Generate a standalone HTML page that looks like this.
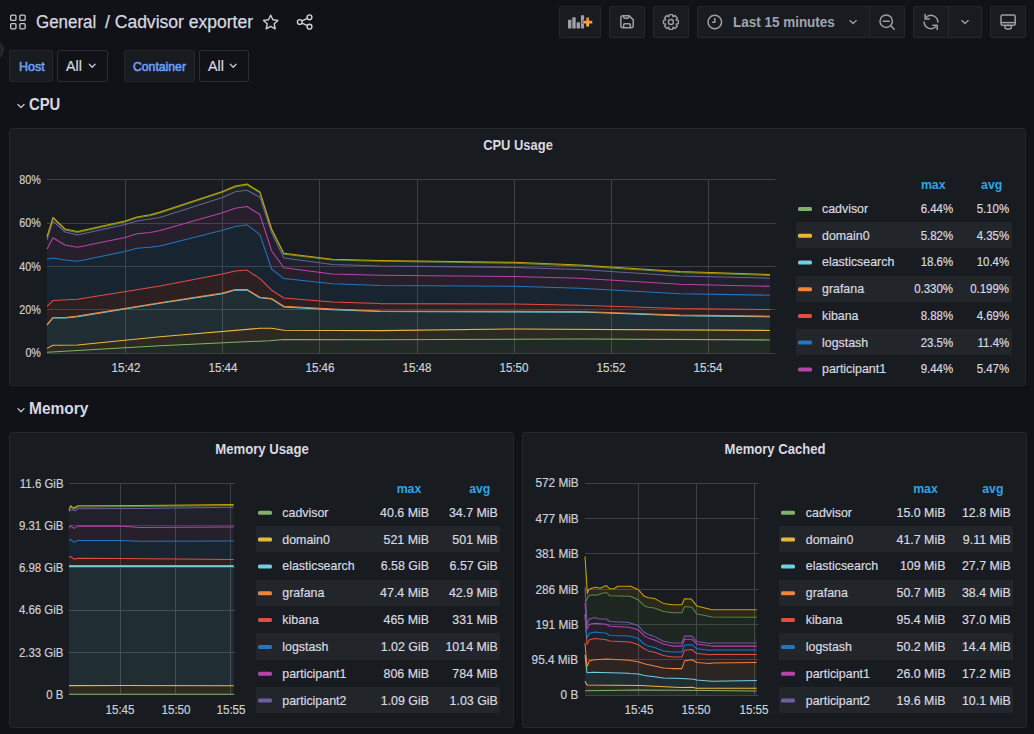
<!DOCTYPE html>
<html><head><meta charset="utf-8"><style>
html,body{margin:0;padding:0;}
body{width:1034px;height:734px;overflow:hidden;background:#111217;position:relative;font-family:"Liberation Sans", sans-serif;}
</style></head><body>

<div style='position:absolute;top:13.24px;font-size:18.5px;line-height:18.5px;color:#d8d9e0;font-weight:400;white-space:nowrap;transform:scaleX(0.9146);transform-origin:0 0;left:35.8px;-webkit-text-stroke:0.25px #d8d9e0;'>General</div>
<div style='position:absolute;top:13.24px;font-size:18.5px;line-height:18.5px;color:#d8d9e0;font-weight:400;white-space:nowrap;transform:scaleX(0.9470);transform-origin:0 0;left:105px;-webkit-text-stroke:0.25px #d8d9e0;'>/ Cadvisor exporter</div>
<div style="position:absolute;left:559px;top:6px;width:42px;height:32px;background:#181b1f;border:1px solid #25272d;box-sizing:border-box;border-radius:2px;"></div>
<div style="position:absolute;left:609px;top:6px;width:36px;height:32px;background:#181b1f;border:1px solid #25272d;box-sizing:border-box;border-radius:2px;"></div>
<div style="position:absolute;left:653px;top:6px;width:36px;height:32px;background:#181b1f;border:1px solid #25272d;box-sizing:border-box;border-radius:2px;"></div>
<div style="position:absolute;left:697px;top:6px;width:208px;height:32px;background:#181b1f;border:1px solid #25272d;box-sizing:border-box;border-radius:2px;"></div>
<div style="position:absolute;left:913px;top:6px;width:69px;height:32px;background:#181b1f;border:1px solid #25272d;box-sizing:border-box;border-radius:2px;"></div>
<div style="position:absolute;left:990px;top:6px;width:36px;height:32px;background:#181b1f;border:1px solid #25272d;box-sizing:border-box;border-radius:2px;"></div>
<div style='position:absolute;top:14.73px;font-size:14.5px;line-height:14.5px;color:#a3a4ab;font-weight:700;white-space:nowrap;transform:scaleX(0.9289);transform-origin:0 0;left:732.7px;'>Last 15 minutes</div>
<div style="position:absolute;left:-16px;top:39.5px;width:18px;height:18px;border-radius:50%;background:#212429;border:1px solid #2a2d33;"></div>
<div style="position:absolute;left:9px;top:50px;width:44px;height:32px;background:#181b1f;border:1px solid #24262c;box-sizing:border-box;border-radius:2px;"></div>
<div style='position:absolute;top:60.76px;font-size:12.8px;line-height:12.8px;color:#6e9fff;font-weight:400;white-space:nowrap;transform:scaleX(0.9727);transform-origin:0 0;left:18.6px;-webkit-text-stroke:0.55px #6e9fff;'>Host</div>
<div style="position:absolute;left:57px;top:50px;width:51px;height:32px;background:#111217;border:1px solid #2a2d34;box-sizing:border-box;border-radius:2px;"></div>
<div style='position:absolute;top:58.53px;font-size:14.5px;line-height:14.5px;color:#d8d9e0;font-weight:400;white-space:nowrap;transform:scaleX(0.9804);transform-origin:0 0;left:66.2px;-webkit-text-stroke:0.2px #d8d9e0;'>All</div>
<div style="position:absolute;left:124px;top:50px;width:71px;height:32px;background:#181b1f;border:1px solid #24262c;box-sizing:border-box;border-radius:2px;"></div>
<div style='position:absolute;top:60.76px;font-size:12.8px;line-height:12.8px;color:#6e9fff;font-weight:400;white-space:nowrap;transform:scaleX(0.9549);transform-origin:0 0;left:132.7px;-webkit-text-stroke:0.55px #6e9fff;'>Container</div>
<div style="position:absolute;left:199px;top:50px;width:50px;height:32px;background:#111217;border:1px solid #2a2d34;box-sizing:border-box;border-radius:2px;"></div>
<div style='position:absolute;top:58.53px;font-size:14.5px;line-height:14.5px;color:#d8d9e0;font-weight:400;white-space:nowrap;transform:scaleX(0.9804);transform-origin:0 0;left:208px;-webkit-text-stroke:0.2px #d8d9e0;'>All</div>
<div style='position:absolute;top:95.73px;font-size:16.5px;line-height:16.5px;color:#d8d9e0;font-weight:700;white-space:nowrap;transform:scaleX(0.8984);transform-origin:0 0;left:29px;'>CPU</div>
<div style='position:absolute;top:399.93px;font-size:16.5px;line-height:16.5px;color:#d8d9e0;font-weight:700;white-space:nowrap;transform:scaleX(0.9404);transform-origin:0 0;left:29.4px;'>Memory</div>
<div style="position:absolute;left:9px;top:128px;width:1017px;height:258px;background:#181b1f;border:1px solid #25272d;box-sizing:border-box;border-radius:3px;"></div>
<div style="position:absolute;left:9px;top:432px;width:505px;height:296px;background:#181b1f;border:1px solid #25272d;box-sizing:border-box;border-radius:3px;"></div>
<div style="position:absolute;left:522px;top:432px;width:505px;height:296px;background:#181b1f;border:1px solid #25272d;box-sizing:border-box;border-radius:3px;"></div>
<div style='position:absolute;top:137.73px;font-size:14.5px;line-height:14.5px;color:#d8d9e0;font-weight:700;white-space:nowrap;transform:scaleX(0.8917);transform-origin:50% 0;left:217.50px;width:600px;text-align:center;'>CPU Usage</div>
<div style='position:absolute;top:441.83px;font-size:14.5px;line-height:14.5px;color:#d8d9e0;font-weight:700;white-space:nowrap;transform:scaleX(0.9074);transform-origin:50% 0;left:-38.40px;width:600px;text-align:center;'>Memory Usage</div>
<div style='position:absolute;top:441.93px;font-size:14.5px;line-height:14.5px;color:#d8d9e0;font-weight:700;white-space:nowrap;transform:scaleX(0.9017);transform-origin:50% 0;left:474.50px;width:600px;text-align:center;'>Memory Cached</div>
<div style='position:absolute;top:173.60px;font-size:12.4px;line-height:12.4px;color:#cdced6;font-weight:400;white-space:nowrap;transform:scaleX(0.8669);transform-origin:100% 0;right:993.10px;text-align:right;-webkit-text-stroke:0.2px #cdced6;'>80%</div>
<div style='position:absolute;top:217.10px;font-size:12.4px;line-height:12.4px;color:#cdced6;font-weight:400;white-space:nowrap;transform:scaleX(0.8669);transform-origin:100% 0;right:993.10px;text-align:right;-webkit-text-stroke:0.2px #cdced6;'>60%</div>
<div style='position:absolute;top:260.50px;font-size:12.4px;line-height:12.4px;color:#cdced6;font-weight:400;white-space:nowrap;transform:scaleX(0.8669);transform-origin:100% 0;right:993.10px;text-align:right;-webkit-text-stroke:0.2px #cdced6;'>40%</div>
<div style='position:absolute;top:303.80px;font-size:12.4px;line-height:12.4px;color:#cdced6;font-weight:400;white-space:nowrap;transform:scaleX(0.8669);transform-origin:100% 0;right:993.10px;text-align:right;-webkit-text-stroke:0.2px #cdced6;'>20%</div>
<div style='position:absolute;top:347.10px;font-size:12.4px;line-height:12.4px;color:#cdced6;font-weight:400;white-space:nowrap;transform:scaleX(0.8669);transform-origin:100% 0;right:993.10px;text-align:right;-webkit-text-stroke:0.2px #cdced6;'>0%</div>
<div style='position:absolute;top:361.64px;font-size:12px;line-height:12px;color:#cdced6;font-weight:400;white-space:nowrap;transform:scaleX(0.9667);transform-origin:50% 0;left:-174.00px;width:600px;text-align:center;-webkit-text-stroke:0.2px #cdced6;'>15:42</div>
<div style='position:absolute;top:361.64px;font-size:12px;line-height:12px;color:#cdced6;font-weight:400;white-space:nowrap;transform:scaleX(0.9667);transform-origin:50% 0;left:-77.00px;width:600px;text-align:center;-webkit-text-stroke:0.2px #cdced6;'>15:44</div>
<div style='position:absolute;top:361.64px;font-size:12px;line-height:12px;color:#cdced6;font-weight:400;white-space:nowrap;transform:scaleX(0.9667);transform-origin:50% 0;left:20.00px;width:600px;text-align:center;-webkit-text-stroke:0.2px #cdced6;'>15:46</div>
<div style='position:absolute;top:361.64px;font-size:12px;line-height:12px;color:#cdced6;font-weight:400;white-space:nowrap;transform:scaleX(0.9667);transform-origin:50% 0;left:117.05px;width:600px;text-align:center;-webkit-text-stroke:0.2px #cdced6;'>15:48</div>
<div style='position:absolute;top:361.64px;font-size:12px;line-height:12px;color:#cdced6;font-weight:400;white-space:nowrap;transform:scaleX(0.9667);transform-origin:50% 0;left:214.10px;width:600px;text-align:center;-webkit-text-stroke:0.2px #cdced6;'>15:50</div>
<div style='position:absolute;top:361.64px;font-size:12px;line-height:12px;color:#cdced6;font-weight:400;white-space:nowrap;transform:scaleX(0.9667);transform-origin:50% 0;left:311.10px;width:600px;text-align:center;-webkit-text-stroke:0.2px #cdced6;'>15:52</div>
<div style='position:absolute;top:361.64px;font-size:12px;line-height:12px;color:#cdced6;font-weight:400;white-space:nowrap;transform:scaleX(0.9667);transform-origin:50% 0;left:408.10px;width:600px;text-align:center;-webkit-text-stroke:0.2px #cdced6;'>15:54</div>
<div style='position:absolute;top:477.57px;font-size:12.2px;line-height:12.2px;color:#cdced6;font-weight:400;white-space:nowrap;transform:scaleX(0.9385);transform-origin:100% 0;right:970.70px;text-align:right;-webkit-text-stroke:0.2px #cdced6;'>11.6 GiB</div>
<div style='position:absolute;top:519.87px;font-size:12.2px;line-height:12.2px;color:#cdced6;font-weight:400;white-space:nowrap;transform:scaleX(0.9385);transform-origin:100% 0;right:970.70px;text-align:right;-webkit-text-stroke:0.2px #cdced6;'>9.31 GiB</div>
<div style='position:absolute;top:561.97px;font-size:12.2px;line-height:12.2px;color:#cdced6;font-weight:400;white-space:nowrap;transform:scaleX(0.9385);transform-origin:100% 0;right:970.70px;text-align:right;-webkit-text-stroke:0.2px #cdced6;'>6.98 GiB</div>
<div style='position:absolute;top:604.47px;font-size:12.2px;line-height:12.2px;color:#cdced6;font-weight:400;white-space:nowrap;transform:scaleX(0.9385);transform-origin:100% 0;right:970.70px;text-align:right;-webkit-text-stroke:0.2px #cdced6;'>4.66 GiB</div>
<div style='position:absolute;top:646.87px;font-size:12.2px;line-height:12.2px;color:#cdced6;font-weight:400;white-space:nowrap;transform:scaleX(0.9385);transform-origin:100% 0;right:970.70px;text-align:right;-webkit-text-stroke:0.2px #cdced6;'>2.33 GiB</div>
<div style='position:absolute;top:688.67px;font-size:12.2px;line-height:12.2px;color:#cdced6;font-weight:400;white-space:nowrap;transform:scaleX(0.9385);transform-origin:100% 0;right:970.70px;text-align:right;-webkit-text-stroke:0.2px #cdced6;'>0 B</div>
<div style='position:absolute;top:704.34px;font-size:12px;line-height:12px;color:#cdced6;font-weight:400;white-space:nowrap;transform:scaleX(0.9667);transform-origin:50% 0;left:-180.00px;width:600px;text-align:center;-webkit-text-stroke:0.2px #cdced6;'>15:45</div>
<div style='position:absolute;top:704.34px;font-size:12px;line-height:12px;color:#cdced6;font-weight:400;white-space:nowrap;transform:scaleX(0.9667);transform-origin:50% 0;left:-124.10px;width:600px;text-align:center;-webkit-text-stroke:0.2px #cdced6;'>15:50</div>
<div style='position:absolute;top:704.34px;font-size:12px;line-height:12px;color:#cdced6;font-weight:400;white-space:nowrap;transform:scaleX(0.9667);transform-origin:50% 0;left:-69.20px;width:600px;text-align:center;-webkit-text-stroke:0.2px #cdced6;'>15:55</div>
<div style='position:absolute;top:477.47px;font-size:12.2px;line-height:12.2px;color:#cdced6;font-weight:400;white-space:nowrap;transform:scaleX(0.9672);transform-origin:100% 0;right:455.50px;text-align:right;-webkit-text-stroke:0.2px #cdced6;'>572 MiB</div>
<div style='position:absolute;top:512.67px;font-size:12.2px;line-height:12.2px;color:#cdced6;font-weight:400;white-space:nowrap;transform:scaleX(0.9672);transform-origin:100% 0;right:455.50px;text-align:right;-webkit-text-stroke:0.2px #cdced6;'>477 MiB</div>
<div style='position:absolute;top:547.97px;font-size:12.2px;line-height:12.2px;color:#cdced6;font-weight:400;white-space:nowrap;transform:scaleX(0.9672);transform-origin:100% 0;right:455.50px;text-align:right;-webkit-text-stroke:0.2px #cdced6;'>381 MiB</div>
<div style='position:absolute;top:583.57px;font-size:12.2px;line-height:12.2px;color:#cdced6;font-weight:400;white-space:nowrap;transform:scaleX(0.9672);transform-origin:100% 0;right:455.50px;text-align:right;-webkit-text-stroke:0.2px #cdced6;'>286 MiB</div>
<div style='position:absolute;top:618.77px;font-size:12.2px;line-height:12.2px;color:#cdced6;font-weight:400;white-space:nowrap;transform:scaleX(0.9672);transform-origin:100% 0;right:455.50px;text-align:right;-webkit-text-stroke:0.2px #cdced6;'>191 MiB</div>
<div style='position:absolute;top:653.87px;font-size:12.2px;line-height:12.2px;color:#cdced6;font-weight:400;white-space:nowrap;transform:scaleX(0.9672);transform-origin:100% 0;right:455.50px;text-align:right;-webkit-text-stroke:0.2px #cdced6;'>95.4 MiB</div>
<div style='position:absolute;top:689.27px;font-size:12.2px;line-height:12.2px;color:#cdced6;font-weight:400;white-space:nowrap;transform:scaleX(0.9672);transform-origin:100% 0;right:455.50px;text-align:right;-webkit-text-stroke:0.2px #cdced6;'>0 B</div>
<div style='position:absolute;top:704.34px;font-size:12px;line-height:12px;color:#cdced6;font-weight:400;white-space:nowrap;transform:scaleX(0.9667);transform-origin:50% 0;left:339.00px;width:600px;text-align:center;-webkit-text-stroke:0.2px #cdced6;'>15:45</div>
<div style='position:absolute;top:704.34px;font-size:12px;line-height:12px;color:#cdced6;font-weight:400;white-space:nowrap;transform:scaleX(0.9667);transform-origin:50% 0;left:395.80px;width:600px;text-align:center;-webkit-text-stroke:0.2px #cdced6;'>15:50</div>
<div style='position:absolute;top:704.34px;font-size:12px;line-height:12px;color:#cdced6;font-weight:400;white-space:nowrap;transform:scaleX(0.9667);transform-origin:50% 0;left:453.70px;width:600px;text-align:center;-webkit-text-stroke:0.2px #cdced6;'>15:55</div>
<div style='position:absolute;top:179.09px;font-size:12.3px;line-height:12.3px;color:#33a2e5;font-weight:700;white-space:nowrap;left:633.20px;width:600px;text-align:center;'>max</div>
<div style='position:absolute;top:179.09px;font-size:12.3px;line-height:12.3px;color:#33a2e5;font-weight:700;white-space:nowrap;left:691.70px;width:600px;text-align:center;'>avg</div>
<div style='position:absolute;top:202.90px;font-size:12.4px;line-height:12.4px;color:#d8d9e0;font-weight:400;white-space:nowrap;left:822px;-webkit-text-stroke:0.2px #d8d9e0;'>cadvisor</div>
<div style='position:absolute;top:202.90px;font-size:12.4px;line-height:12.4px;color:#d8d9e0;font-weight:400;white-space:nowrap;transform:scaleX(0.9250);transform-origin:100% 0;right:81.00px;text-align:right;-webkit-text-stroke:0.2px #d8d9e0;'>6.44%</div>
<div style='position:absolute;top:202.90px;font-size:12.4px;line-height:12.4px;color:#d8d9e0;font-weight:400;white-space:nowrap;transform:scaleX(0.9250);transform-origin:100% 0;right:24.50px;text-align:right;-webkit-text-stroke:0.2px #d8d9e0;'>5.10%</div>
<div style="position:absolute;left:796px;top:222.1px;width:216px;height:26.3px;background:#22252a;"></div>
<div style='position:absolute;top:229.63px;font-size:12.4px;line-height:12.4px;color:#d8d9e0;font-weight:400;white-space:nowrap;left:822px;-webkit-text-stroke:0.2px #d8d9e0;'>domain0</div>
<div style='position:absolute;top:229.63px;font-size:12.4px;line-height:12.4px;color:#d8d9e0;font-weight:400;white-space:nowrap;transform:scaleX(0.9250);transform-origin:100% 0;right:81.00px;text-align:right;-webkit-text-stroke:0.2px #d8d9e0;'>5.82%</div>
<div style='position:absolute;top:229.63px;font-size:12.4px;line-height:12.4px;color:#d8d9e0;font-weight:400;white-space:nowrap;transform:scaleX(0.9250);transform-origin:100% 0;right:24.50px;text-align:right;-webkit-text-stroke:0.2px #d8d9e0;'>4.35%</div>
<div style='position:absolute;top:256.36px;font-size:12.4px;line-height:12.4px;color:#d8d9e0;font-weight:400;white-space:nowrap;left:822px;-webkit-text-stroke:0.2px #d8d9e0;'>elasticsearch</div>
<div style='position:absolute;top:256.36px;font-size:12.4px;line-height:12.4px;color:#d8d9e0;font-weight:400;white-space:nowrap;transform:scaleX(0.9250);transform-origin:100% 0;right:81.00px;text-align:right;-webkit-text-stroke:0.2px #d8d9e0;'>18.6%</div>
<div style='position:absolute;top:256.36px;font-size:12.4px;line-height:12.4px;color:#d8d9e0;font-weight:400;white-space:nowrap;transform:scaleX(0.9250);transform-origin:100% 0;right:24.50px;text-align:right;-webkit-text-stroke:0.2px #d8d9e0;'>10.4%</div>
<div style="position:absolute;left:796px;top:275.6px;width:216px;height:26.3px;background:#22252a;"></div>
<div style='position:absolute;top:283.09px;font-size:12.4px;line-height:12.4px;color:#d8d9e0;font-weight:400;white-space:nowrap;left:822px;-webkit-text-stroke:0.2px #d8d9e0;'>grafana</div>
<div style='position:absolute;top:283.09px;font-size:12.4px;line-height:12.4px;color:#d8d9e0;font-weight:400;white-space:nowrap;transform:scaleX(0.9250);transform-origin:100% 0;right:81.00px;text-align:right;-webkit-text-stroke:0.2px #d8d9e0;'>0.330%</div>
<div style='position:absolute;top:283.09px;font-size:12.4px;line-height:12.4px;color:#d8d9e0;font-weight:400;white-space:nowrap;transform:scaleX(0.9250);transform-origin:100% 0;right:24.50px;text-align:right;-webkit-text-stroke:0.2px #d8d9e0;'>0.199%</div>
<div style='position:absolute;top:309.82px;font-size:12.4px;line-height:12.4px;color:#d8d9e0;font-weight:400;white-space:nowrap;left:822px;-webkit-text-stroke:0.2px #d8d9e0;'>kibana</div>
<div style='position:absolute;top:309.82px;font-size:12.4px;line-height:12.4px;color:#d8d9e0;font-weight:400;white-space:nowrap;transform:scaleX(0.9250);transform-origin:100% 0;right:81.00px;text-align:right;-webkit-text-stroke:0.2px #d8d9e0;'>8.88%</div>
<div style='position:absolute;top:309.82px;font-size:12.4px;line-height:12.4px;color:#d8d9e0;font-weight:400;white-space:nowrap;transform:scaleX(0.9250);transform-origin:100% 0;right:24.50px;text-align:right;-webkit-text-stroke:0.2px #d8d9e0;'>4.69%</div>
<div style="position:absolute;left:796px;top:329.0px;width:216px;height:26.3px;background:#22252a;"></div>
<div style='position:absolute;top:336.55px;font-size:12.4px;line-height:12.4px;color:#d8d9e0;font-weight:400;white-space:nowrap;left:822px;-webkit-text-stroke:0.2px #d8d9e0;'>logstash</div>
<div style='position:absolute;top:336.55px;font-size:12.4px;line-height:12.4px;color:#d8d9e0;font-weight:400;white-space:nowrap;transform:scaleX(0.9250);transform-origin:100% 0;right:81.00px;text-align:right;-webkit-text-stroke:0.2px #d8d9e0;'>23.5%</div>
<div style='position:absolute;top:336.55px;font-size:12.4px;line-height:12.4px;color:#d8d9e0;font-weight:400;white-space:nowrap;transform:scaleX(0.9250);transform-origin:100% 0;right:24.50px;text-align:right;-webkit-text-stroke:0.2px #d8d9e0;'>11.4%</div>
<div style='position:absolute;top:363.28px;font-size:12.4px;line-height:12.4px;color:#d8d9e0;font-weight:400;white-space:nowrap;left:822px;-webkit-text-stroke:0.2px #d8d9e0;'>participant1</div>
<div style='position:absolute;top:363.28px;font-size:12.4px;line-height:12.4px;color:#d8d9e0;font-weight:400;white-space:nowrap;transform:scaleX(0.9250);transform-origin:100% 0;right:81.00px;text-align:right;-webkit-text-stroke:0.2px #d8d9e0;'>9.44%</div>
<div style='position:absolute;top:363.28px;font-size:12.4px;line-height:12.4px;color:#d8d9e0;font-weight:400;white-space:nowrap;transform:scaleX(0.9250);transform-origin:100% 0;right:24.50px;text-align:right;-webkit-text-stroke:0.2px #d8d9e0;'>5.47%</div>
<div style='position:absolute;top:482.59px;font-size:12.3px;line-height:12.3px;color:#33a2e5;font-weight:700;white-space:nowrap;left:109.00px;width:600px;text-align:center;'>max</div>
<div style='position:absolute;top:482.59px;font-size:12.3px;line-height:12.3px;color:#33a2e5;font-weight:700;white-space:nowrap;left:179.80px;width:600px;text-align:center;'>avg</div>
<div style='position:absolute;top:506.70px;font-size:12.4px;line-height:12.4px;color:#d8d9e0;font-weight:400;white-space:nowrap;left:282.3px;-webkit-text-stroke:0.2px #d8d9e0;'>cadvisor</div>
<div style='position:absolute;top:506.70px;font-size:12.4px;line-height:12.4px;color:#d8d9e0;font-weight:400;white-space:nowrap;transform:scaleX(1.0000);transform-origin:100% 0;right:605.00px;text-align:right;-webkit-text-stroke:0.2px #d8d9e0;'>40.6 MiB</div>
<div style='position:absolute;top:506.70px;font-size:12.4px;line-height:12.4px;color:#d8d9e0;font-weight:400;white-space:nowrap;transform:scaleX(1.0000);transform-origin:100% 0;right:536.20px;text-align:right;-webkit-text-stroke:0.2px #d8d9e0;'>34.7 MiB</div>
<div style="position:absolute;left:256px;top:526.0px;width:244px;height:26.3px;background:#22252a;"></div>
<div style='position:absolute;top:533.53px;font-size:12.4px;line-height:12.4px;color:#d8d9e0;font-weight:400;white-space:nowrap;left:282.3px;-webkit-text-stroke:0.2px #d8d9e0;'>domain0</div>
<div style='position:absolute;top:533.53px;font-size:12.4px;line-height:12.4px;color:#d8d9e0;font-weight:400;white-space:nowrap;transform:scaleX(1.0000);transform-origin:100% 0;right:605.00px;text-align:right;-webkit-text-stroke:0.2px #d8d9e0;'>521 MiB</div>
<div style='position:absolute;top:533.53px;font-size:12.4px;line-height:12.4px;color:#d8d9e0;font-weight:400;white-space:nowrap;transform:scaleX(1.0000);transform-origin:100% 0;right:536.20px;text-align:right;-webkit-text-stroke:0.2px #d8d9e0;'>501 MiB</div>
<div style='position:absolute;top:560.36px;font-size:12.4px;line-height:12.4px;color:#d8d9e0;font-weight:400;white-space:nowrap;left:282.3px;-webkit-text-stroke:0.2px #d8d9e0;'>elasticsearch</div>
<div style='position:absolute;top:560.36px;font-size:12.4px;line-height:12.4px;color:#d8d9e0;font-weight:400;white-space:nowrap;transform:scaleX(1.0000);transform-origin:100% 0;right:605.00px;text-align:right;-webkit-text-stroke:0.2px #d8d9e0;'>6.58 GiB</div>
<div style='position:absolute;top:560.36px;font-size:12.4px;line-height:12.4px;color:#d8d9e0;font-weight:400;white-space:nowrap;transform:scaleX(1.0000);transform-origin:100% 0;right:536.20px;text-align:right;-webkit-text-stroke:0.2px #d8d9e0;'>6.57 GiB</div>
<div style="position:absolute;left:256px;top:579.7px;width:244px;height:26.3px;background:#22252a;"></div>
<div style='position:absolute;top:587.19px;font-size:12.4px;line-height:12.4px;color:#d8d9e0;font-weight:400;white-space:nowrap;left:282.3px;-webkit-text-stroke:0.2px #d8d9e0;'>grafana</div>
<div style='position:absolute;top:587.19px;font-size:12.4px;line-height:12.4px;color:#d8d9e0;font-weight:400;white-space:nowrap;transform:scaleX(1.0000);transform-origin:100% 0;right:605.00px;text-align:right;-webkit-text-stroke:0.2px #d8d9e0;'>47.4 MiB</div>
<div style='position:absolute;top:587.19px;font-size:12.4px;line-height:12.4px;color:#d8d9e0;font-weight:400;white-space:nowrap;transform:scaleX(1.0000);transform-origin:100% 0;right:536.20px;text-align:right;-webkit-text-stroke:0.2px #d8d9e0;'>42.9 MiB</div>
<div style='position:absolute;top:614.02px;font-size:12.4px;line-height:12.4px;color:#d8d9e0;font-weight:400;white-space:nowrap;left:282.3px;-webkit-text-stroke:0.2px #d8d9e0;'>kibana</div>
<div style='position:absolute;top:614.02px;font-size:12.4px;line-height:12.4px;color:#d8d9e0;font-weight:400;white-space:nowrap;transform:scaleX(1.0000);transform-origin:100% 0;right:605.00px;text-align:right;-webkit-text-stroke:0.2px #d8d9e0;'>465 MiB</div>
<div style='position:absolute;top:614.02px;font-size:12.4px;line-height:12.4px;color:#d8d9e0;font-weight:400;white-space:nowrap;transform:scaleX(1.0000);transform-origin:100% 0;right:536.20px;text-align:right;-webkit-text-stroke:0.2px #d8d9e0;'>331 MiB</div>
<div style="position:absolute;left:256px;top:633.3px;width:244px;height:26.3px;background:#22252a;"></div>
<div style='position:absolute;top:640.85px;font-size:12.4px;line-height:12.4px;color:#d8d9e0;font-weight:400;white-space:nowrap;left:282.3px;-webkit-text-stroke:0.2px #d8d9e0;'>logstash</div>
<div style='position:absolute;top:640.85px;font-size:12.4px;line-height:12.4px;color:#d8d9e0;font-weight:400;white-space:nowrap;transform:scaleX(1.0000);transform-origin:100% 0;right:605.00px;text-align:right;-webkit-text-stroke:0.2px #d8d9e0;'>1.02 GiB</div>
<div style='position:absolute;top:640.85px;font-size:12.4px;line-height:12.4px;color:#d8d9e0;font-weight:400;white-space:nowrap;transform:scaleX(1.0000);transform-origin:100% 0;right:536.20px;text-align:right;-webkit-text-stroke:0.2px #d8d9e0;'>1014 MiB</div>
<div style='position:absolute;top:667.68px;font-size:12.4px;line-height:12.4px;color:#d8d9e0;font-weight:400;white-space:nowrap;left:282.3px;-webkit-text-stroke:0.2px #d8d9e0;'>participant1</div>
<div style='position:absolute;top:667.68px;font-size:12.4px;line-height:12.4px;color:#d8d9e0;font-weight:400;white-space:nowrap;transform:scaleX(1.0000);transform-origin:100% 0;right:605.00px;text-align:right;-webkit-text-stroke:0.2px #d8d9e0;'>806 MiB</div>
<div style='position:absolute;top:667.68px;font-size:12.4px;line-height:12.4px;color:#d8d9e0;font-weight:400;white-space:nowrap;transform:scaleX(1.0000);transform-origin:100% 0;right:536.20px;text-align:right;-webkit-text-stroke:0.2px #d8d9e0;'>784 MiB</div>
<div style="position:absolute;left:256px;top:687.0px;width:244px;height:26.3px;background:#22252a;"></div>
<div style='position:absolute;top:694.51px;font-size:12.4px;line-height:12.4px;color:#d8d9e0;font-weight:400;white-space:nowrap;left:282.3px;-webkit-text-stroke:0.2px #d8d9e0;'>participant2</div>
<div style='position:absolute;top:694.51px;font-size:12.4px;line-height:12.4px;color:#d8d9e0;font-weight:400;white-space:nowrap;transform:scaleX(1.0000);transform-origin:100% 0;right:605.00px;text-align:right;-webkit-text-stroke:0.2px #d8d9e0;'>1.09 GiB</div>
<div style='position:absolute;top:694.51px;font-size:12.4px;line-height:12.4px;color:#d8d9e0;font-weight:400;white-space:nowrap;transform:scaleX(1.0000);transform-origin:100% 0;right:536.20px;text-align:right;-webkit-text-stroke:0.2px #d8d9e0;'>1.03 GiB</div>
<div style='position:absolute;top:482.59px;font-size:12.3px;line-height:12.3px;color:#33a2e5;font-weight:700;white-space:nowrap;left:625.50px;width:600px;text-align:center;'>max</div>
<div style='position:absolute;top:482.59px;font-size:12.3px;line-height:12.3px;color:#33a2e5;font-weight:700;white-space:nowrap;left:692.90px;width:600px;text-align:center;'>avg</div>
<div style='position:absolute;top:506.70px;font-size:12.4px;line-height:12.4px;color:#d8d9e0;font-weight:400;white-space:nowrap;left:805.8px;-webkit-text-stroke:0.2px #d8d9e0;'>cadvisor</div>
<div style='position:absolute;top:506.70px;font-size:12.4px;line-height:12.4px;color:#d8d9e0;font-weight:400;white-space:nowrap;transform:scaleX(1.0000);transform-origin:100% 0;right:88.60px;text-align:right;-webkit-text-stroke:0.2px #d8d9e0;'>15.0 MiB</div>
<div style='position:absolute;top:506.70px;font-size:12.4px;line-height:12.4px;color:#d8d9e0;font-weight:400;white-space:nowrap;transform:scaleX(1.0000);transform-origin:100% 0;right:23.20px;text-align:right;-webkit-text-stroke:0.2px #d8d9e0;'>12.8 MiB</div>
<div style="position:absolute;left:779px;top:526.0px;width:234px;height:26.3px;background:#22252a;"></div>
<div style='position:absolute;top:533.53px;font-size:12.4px;line-height:12.4px;color:#d8d9e0;font-weight:400;white-space:nowrap;left:805.8px;-webkit-text-stroke:0.2px #d8d9e0;'>domain0</div>
<div style='position:absolute;top:533.53px;font-size:12.4px;line-height:12.4px;color:#d8d9e0;font-weight:400;white-space:nowrap;transform:scaleX(1.0000);transform-origin:100% 0;right:88.60px;text-align:right;-webkit-text-stroke:0.2px #d8d9e0;'>41.7 MiB</div>
<div style='position:absolute;top:533.53px;font-size:12.4px;line-height:12.4px;color:#d8d9e0;font-weight:400;white-space:nowrap;transform:scaleX(1.0000);transform-origin:100% 0;right:23.20px;text-align:right;-webkit-text-stroke:0.2px #d8d9e0;'>9.11 MiB</div>
<div style='position:absolute;top:560.36px;font-size:12.4px;line-height:12.4px;color:#d8d9e0;font-weight:400;white-space:nowrap;left:805.8px;-webkit-text-stroke:0.2px #d8d9e0;'>elasticsearch</div>
<div style='position:absolute;top:560.36px;font-size:12.4px;line-height:12.4px;color:#d8d9e0;font-weight:400;white-space:nowrap;transform:scaleX(1.0000);transform-origin:100% 0;right:88.60px;text-align:right;-webkit-text-stroke:0.2px #d8d9e0;'>109 MiB</div>
<div style='position:absolute;top:560.36px;font-size:12.4px;line-height:12.4px;color:#d8d9e0;font-weight:400;white-space:nowrap;transform:scaleX(1.0000);transform-origin:100% 0;right:23.20px;text-align:right;-webkit-text-stroke:0.2px #d8d9e0;'>27.7 MiB</div>
<div style="position:absolute;left:779px;top:579.7px;width:234px;height:26.3px;background:#22252a;"></div>
<div style='position:absolute;top:587.19px;font-size:12.4px;line-height:12.4px;color:#d8d9e0;font-weight:400;white-space:nowrap;left:805.8px;-webkit-text-stroke:0.2px #d8d9e0;'>grafana</div>
<div style='position:absolute;top:587.19px;font-size:12.4px;line-height:12.4px;color:#d8d9e0;font-weight:400;white-space:nowrap;transform:scaleX(1.0000);transform-origin:100% 0;right:88.60px;text-align:right;-webkit-text-stroke:0.2px #d8d9e0;'>50.7 MiB</div>
<div style='position:absolute;top:587.19px;font-size:12.4px;line-height:12.4px;color:#d8d9e0;font-weight:400;white-space:nowrap;transform:scaleX(1.0000);transform-origin:100% 0;right:23.20px;text-align:right;-webkit-text-stroke:0.2px #d8d9e0;'>38.4 MiB</div>
<div style='position:absolute;top:614.02px;font-size:12.4px;line-height:12.4px;color:#d8d9e0;font-weight:400;white-space:nowrap;left:805.8px;-webkit-text-stroke:0.2px #d8d9e0;'>kibana</div>
<div style='position:absolute;top:614.02px;font-size:12.4px;line-height:12.4px;color:#d8d9e0;font-weight:400;white-space:nowrap;transform:scaleX(1.0000);transform-origin:100% 0;right:88.60px;text-align:right;-webkit-text-stroke:0.2px #d8d9e0;'>95.4 MiB</div>
<div style='position:absolute;top:614.02px;font-size:12.4px;line-height:12.4px;color:#d8d9e0;font-weight:400;white-space:nowrap;transform:scaleX(1.0000);transform-origin:100% 0;right:23.20px;text-align:right;-webkit-text-stroke:0.2px #d8d9e0;'>37.0 MiB</div>
<div style="position:absolute;left:779px;top:633.3px;width:234px;height:26.3px;background:#22252a;"></div>
<div style='position:absolute;top:640.85px;font-size:12.4px;line-height:12.4px;color:#d8d9e0;font-weight:400;white-space:nowrap;left:805.8px;-webkit-text-stroke:0.2px #d8d9e0;'>logstash</div>
<div style='position:absolute;top:640.85px;font-size:12.4px;line-height:12.4px;color:#d8d9e0;font-weight:400;white-space:nowrap;transform:scaleX(1.0000);transform-origin:100% 0;right:88.60px;text-align:right;-webkit-text-stroke:0.2px #d8d9e0;'>50.2 MiB</div>
<div style='position:absolute;top:640.85px;font-size:12.4px;line-height:12.4px;color:#d8d9e0;font-weight:400;white-space:nowrap;transform:scaleX(1.0000);transform-origin:100% 0;right:23.20px;text-align:right;-webkit-text-stroke:0.2px #d8d9e0;'>14.4 MiB</div>
<div style='position:absolute;top:667.68px;font-size:12.4px;line-height:12.4px;color:#d8d9e0;font-weight:400;white-space:nowrap;left:805.8px;-webkit-text-stroke:0.2px #d8d9e0;'>participant1</div>
<div style='position:absolute;top:667.68px;font-size:12.4px;line-height:12.4px;color:#d8d9e0;font-weight:400;white-space:nowrap;transform:scaleX(1.0000);transform-origin:100% 0;right:88.60px;text-align:right;-webkit-text-stroke:0.2px #d8d9e0;'>26.0 MiB</div>
<div style='position:absolute;top:667.68px;font-size:12.4px;line-height:12.4px;color:#d8d9e0;font-weight:400;white-space:nowrap;transform:scaleX(1.0000);transform-origin:100% 0;right:23.20px;text-align:right;-webkit-text-stroke:0.2px #d8d9e0;'>17.2 MiB</div>
<div style="position:absolute;left:779px;top:687.0px;width:234px;height:26.3px;background:#22252a;"></div>
<div style='position:absolute;top:694.51px;font-size:12.4px;line-height:12.4px;color:#d8d9e0;font-weight:400;white-space:nowrap;left:805.8px;-webkit-text-stroke:0.2px #d8d9e0;'>participant2</div>
<div style='position:absolute;top:694.51px;font-size:12.4px;line-height:12.4px;color:#d8d9e0;font-weight:400;white-space:nowrap;transform:scaleX(1.0000);transform-origin:100% 0;right:88.60px;text-align:right;-webkit-text-stroke:0.2px #d8d9e0;'>19.6 MiB</div>
<div style='position:absolute;top:694.51px;font-size:12.4px;line-height:12.4px;color:#d8d9e0;font-weight:400;white-space:nowrap;transform:scaleX(1.0000);transform-origin:100% 0;right:23.20px;text-align:right;-webkit-text-stroke:0.2px #d8d9e0;'>10.1 MiB</div>
<svg style="position:absolute;left:0;top:0" width="1034" height="734" viewBox="0 0 1034 734"><g fill="none" stroke="#c7c8d0" stroke-width="1.3"><rect x="10.65" y="15.15" width="5.3" height="5.3" rx="1"/><rect x="19.85" y="15.15" width="5.3" height="5.3" rx="1"/><rect x="10.65" y="23.55" width="5.3" height="5.3" rx="1"/><rect x="19.85" y="23.55" width="5.3" height="5.3" rx="1"/></g><path d="M270.7,15.2 L272.9,19.8 L277.9,20.4 L274.2,23.8 L275.2,28.8 L270.7,26.3 L266.2,28.8 L267.2,23.8 L263.5,20.4 L268.5,19.8 Z" fill="none" stroke="#d0d1d8" stroke-width="1.4" stroke-linejoin="round"/><g fill="none" stroke="#d0d1d8" stroke-width="1.4"><circle cx="309.5" cy="17.3" r="2.4"/><circle cx="309.5" cy="26.7" r="2.4"/><circle cx="299.8" cy="22" r="2.4"/><line x1="301.9" y1="20.9" x2="307.4" y2="18.4"/><line x1="301.9" y1="23.1" x2="307.4" y2="25.6"/></g><line x1="869.5" y1="7" x2="869.5" y2="37" stroke="#25272d" stroke-width="1"/><line x1="948.5" y1="7" x2="948.5" y2="37" stroke="#25272d" stroke-width="1"/><g fill="#9d9ea6"><rect x="568" y="19.7" width="3.4" height="8.8" rx="0.5"/><rect x="572.3" y="17.3" width="3.4" height="11.2" rx="0.5"/><rect x="576.6" y="22.2" width="3.4" height="6.3" rx="0.5"/><rect x="580.9" y="15.2" width="3.2" height="13.3" rx="0.5"/></g><defs><linearGradient id="pg" x1="0" y1="0" x2="0" y2="1"><stop offset="0" stop-color="#F47F3A"/><stop offset="1" stop-color="#F8C43A"/></linearGradient></defs><path d="M586.3,17.5 h2.7 v3.2 h3.3 v2.7 h-3.3 v3.1 h-2.7 v-3.1 h-3.3 v-2.7 h3.3 z" fill="url(#pg)" stroke="#181b1f" stroke-width="1" paint-order="stroke"/><g fill="none" stroke="#9d9ea6" stroke-width="1.5" stroke-linejoin="round"><path d="M622.85,15.85 h6.4 l4,4 v6 a2,2 0 0 1 -2,2 h-8.4 a2,2 0 0 1 -2,-2 v-8 a2,2 0 0 1 2,-2 z"/><path d="M623.7,15.85 v1.4 a1,1 0 0 0 1,1 h3 a1,1 0 0 0 1,-1 v-1.4"/><path d="M623.7,27.85 v-3 a1,1 0 0 1 1,-1 h4.6 a1,1 0 0 1 1,1 v3"/></g><path d="M678.32,20.34 L678.32,23.66 L676.06,24.18 L676.09,24.11 L677.32,26.07 L674.97,28.42 L673.01,27.19 L673.08,27.16 L672.56,29.42 L669.24,29.42 L668.72,27.16 L668.79,27.19 L666.83,28.42 L664.48,26.07 L665.71,24.11 L665.74,24.18 L663.48,23.66 L663.48,20.34 L665.74,19.82 L665.71,19.89 L664.48,17.93 L666.83,15.58 L668.79,16.81 L668.72,16.84 L669.24,14.58 L672.56,14.58 L673.08,16.84 L673.01,16.81 L674.97,15.58 L677.32,17.93 L676.09,19.89 L676.06,19.82 Z" fill="none" stroke="#9d9ea6" stroke-width="1.4" stroke-linejoin="round"/><circle cx="670.9" cy="22" r="2.5" fill="none" stroke="#9d9ea6" stroke-width="1.4"/><g fill="none" stroke="#9d9ea6" stroke-width="1.5"><circle cx="714.8" cy="22" r="6.8"/><path d="M714.8,18 v4.2 h-2.6"/></g><path d="M849.9,20.6 L853.1,23.5 L856.3,20.6" fill="none" stroke="#9d9ea6" stroke-width="1.35" stroke-linecap="round" stroke-linejoin="round"/><g fill="none" stroke="#9d9ea6" stroke-width="1.5" stroke-linecap="round"><circle cx="886.2" cy="21.2" r="6.2"/><line x1="883.1" y1="21.2" x2="889.3" y2="21.2"/><line x1="890.8" y1="25.8" x2="894.2" y2="29.2"/></g><g fill="none" stroke="#9d9ea6" stroke-width="1.5" stroke-linecap="round" stroke-linejoin="round"><path d="M926.3,17.2 A6.9,6.9 0 0 1 937.9,22"/><path d="M924.1,22 A6.9,6.9 0 0 0 935.7,26.8"/><path d="M925.1,14.6 v4.3 h4.3"/><path d="M932.9,25.3 h4.3 v4.3"/></g><path d="M961.8,20.6 L965,23.5 L968.2,20.6" fill="none" stroke="#9d9ea6" stroke-width="1.35" stroke-linecap="round" stroke-linejoin="round"/><g fill="none" stroke="#9d9ea6" stroke-width="1.5" stroke-linejoin="round"><rect x="1001" y="15" width="14.2" height="10.3" rx="1.5"/><line x1="1001" y1="22.6" x2="1015.2" y2="22.6"/><rect x="1004.8" y="25.6" width="6.6" height="3.4" rx="1.7"/></g><path d="M89.3,64.3 L92.2,67.2 L95.1,64.3" fill="none" stroke="#c8c9d0" stroke-width="1.3" stroke-linecap="round" stroke-linejoin="round"/><path d="M230.3,64.3 L233.2,67.2 L236.1,64.3" fill="none" stroke="#c8c9d0" stroke-width="1.3" stroke-linecap="round" stroke-linejoin="round"/><path d="M18,104.5 L21,107.6 L24,104.5" fill="none" stroke="#c8c9d2" stroke-width="1.3" stroke-linecap="round" stroke-linejoin="round"/><path d="M18,408.6 L21,411.7 L24,408.6" fill="none" stroke="#c8c9d2" stroke-width="1.3" stroke-linecap="round" stroke-linejoin="round"/><line x1="47" y1="179.5" x2="775.5" y2="179.5" stroke="#3f4146" stroke-width="1"/><line x1="47" y1="223.5" x2="775.5" y2="223.5" stroke="#3f4146" stroke-width="1"/><line x1="47" y1="266.5" x2="775.5" y2="266.5" stroke="#3f4146" stroke-width="1"/><line x1="47" y1="309.5" x2="775.5" y2="309.5" stroke="#3f4146" stroke-width="1"/><line x1="47" y1="353.5" x2="775.5" y2="353.5" stroke="#3f4146" stroke-width="1"/><line x1="125.5" y1="179.5" x2="125.5" y2="353" stroke="#3f4146" stroke-width="1"/><line x1="222.5" y1="179.5" x2="222.5" y2="353" stroke="#3f4146" stroke-width="1"/><line x1="319.5" y1="179.5" x2="319.5" y2="353" stroke="#3f4146" stroke-width="1"/><line x1="417.5" y1="179.5" x2="417.5" y2="353" stroke="#3f4146" stroke-width="1"/><line x1="514.5" y1="179.5" x2="514.5" y2="353" stroke="#3f4146" stroke-width="1"/><line x1="611.5" y1="179.5" x2="611.5" y2="353" stroke="#3f4146" stroke-width="1"/><line x1="708.5" y1="179.5" x2="708.5" y2="353" stroke="#3f4146" stroke-width="1"/><path d="M47.0,352.3 L160.0,345.8 L269.5,340.7 L283.8,339.4 L380.0,339.8 L580.0,338.9 L770.0,339.9 L770.0,353.0 L47.0,353.0 Z" fill="#7EB26D" fill-opacity="0.1" stroke="none"/><path d="M47.0,348.4 L53.0,345.3 L77.5,345.0 L160.0,336.8 L259.9,328.3 L271.6,328.3 L283.8,330.3 L380.0,330.6 L514.0,329.0 L770.0,330.4 L770.0,339.9 L580.0,338.9 L380.0,339.8 L283.8,339.4 L269.5,340.7 L160.0,345.8 L47.0,352.3 Z" fill="#EAB839" fill-opacity="0.1" stroke="none"/><path d="M47.0,325.2 L53.0,318.0 L65.0,318.0 L77.5,316.7 L160.0,303.3 L222.4,293.7 L235.3,290.1 L247.0,290.1 L259.9,297.8 L271.6,299.1 L283.8,306.9 L332.4,309.7 L380.0,311.5 L580.0,312.1 L680.0,315.7 L770.0,316.8 L770.0,330.4 L514.0,329.0 L380.0,330.6 L283.8,330.3 L271.6,328.3 L259.9,328.3 L160.0,336.8 L77.5,345.0 L53.0,345.3 L47.0,348.4 Z" fill="#6ED0E0" fill-opacity="0.1" stroke="none"/><path d="M47.0,324.6 L53.0,317.4 L65.0,317.4 L77.5,316.1 L160.0,302.7 L222.4,293.1 L235.3,289.5 L247.0,289.5 L259.9,297.2 L271.6,298.5 L283.8,306.3 L332.4,309.1 L380.0,310.9 L580.0,311.5 L680.0,315.1 L770.0,316.2 L770.0,316.8 L680.0,315.7 L580.0,312.1 L380.0,311.5 L332.4,309.7 L283.8,306.9 L271.6,299.1 L259.9,297.8 L247.0,290.1 L235.3,290.1 L222.4,293.7 L160.0,303.3 L77.5,316.7 L65.0,318.0 L53.0,318.0 L47.0,325.2 Z" fill="#EF843C" fill-opacity="0.1" stroke="none"/><path d="M47.0,306.3 L53.0,300.6 L77.5,299.3 L160.0,285.9 L222.4,274.0 L235.3,270.9 L247.0,270.1 L259.9,278.6 L271.6,290.2 L283.8,298.0 L332.4,301.9 L380.0,303.6 L514.0,304.0 L580.0,305.2 L680.0,308.6 L770.0,309.5 L770.0,316.2 L680.0,315.1 L580.0,311.5 L380.0,310.9 L332.4,309.1 L283.8,306.3 L271.6,298.5 L259.9,297.2 L247.0,289.5 L235.3,289.5 L222.4,293.1 L160.0,302.7 L77.5,316.1 L65.0,317.4 L53.0,317.4 L47.0,324.6 Z" fill="#E24D42" fill-opacity="0.1" stroke="none"/><path d="M47.0,259.2 L53.0,257.9 L65.0,260.0 L77.5,261.2 L125.0,251.6 L137.0,248.3 L150.0,247.3 L160.0,246.0 L222.4,230.3 L235.3,226.4 L247.0,224.8 L259.9,234.6 L271.6,269.0 L283.8,278.6 L332.4,283.8 L380.0,285.5 L514.0,286.3 L580.0,288.3 L680.0,293.8 L770.0,295.2 L770.0,309.5 L680.0,308.6 L580.0,305.2 L514.0,304.0 L380.0,303.6 L332.4,301.9 L283.8,298.0 L271.6,290.2 L259.9,278.6 L247.0,270.1 L235.3,270.9 L222.4,274.0 L160.0,285.9 L77.5,299.3 L53.0,300.6 L47.0,306.3 Z" fill="#1F78C1" fill-opacity="0.1" stroke="none"/><path d="M47.0,248.9 L53.0,237.8 L65.0,245.0 L77.5,247.2 L125.0,237.5 L137.0,233.8 L150.0,232.4 L160.0,230.5 L222.4,212.7 L235.3,208.3 L247.0,206.5 L259.9,214.5 L271.6,250.7 L283.8,267.7 L332.4,274.0 L380.0,275.3 L514.0,276.6 L580.0,278.2 L680.0,284.3 L770.0,286.3 L770.0,295.2 L680.0,293.8 L580.0,288.3 L514.0,286.3 L380.0,285.5 L332.4,283.8 L283.8,278.6 L271.6,269.0 L259.9,234.6 L247.0,224.8 L235.3,226.4 L222.4,230.3 L160.0,246.0 L150.0,247.3 L137.0,248.3 L125.0,251.6 L77.5,261.2 L65.0,260.0 L53.0,257.9 L47.0,259.2 Z" fill="#BA43A9" fill-opacity="0.1" stroke="none"/><path d="M47.0,239.8 L53.0,221.2 L65.0,232.0 L77.5,235.0 L125.0,224.6 L137.0,221.0 L160.0,217.4 L222.4,197.4 L235.3,191.8 L247.0,190.3 L259.9,197.2 L271.6,232.6 L283.8,257.9 L332.4,264.4 L380.0,266.1 L514.0,267.4 L580.0,269.4 L680.0,276.1 L770.0,278.2 L770.0,286.3 L680.0,284.3 L580.0,278.2 L514.0,276.6 L380.0,275.3 L332.4,274.0 L283.8,267.7 L271.6,250.7 L259.9,214.5 L247.0,206.5 L235.3,208.3 L222.4,212.7 L160.0,230.5 L150.0,232.4 L137.0,233.8 L125.0,237.5 L77.5,247.2 L65.0,245.0 L53.0,237.8 L47.0,248.9 Z" fill="#705DA0" fill-opacity="0.1" stroke="none"/><path d="M47.0,237.6 L53.0,218.2 L65.0,229.9 L77.5,232.4 L125.0,221.9 L137.0,217.8 L150.0,215.7 L160.0,213.0 L222.4,192.3 L235.3,186.9 L247.0,184.9 L259.9,192.9 L271.6,229.9 L283.8,254.2 L332.4,260.1 L380.0,261.3 L514.0,263.2 L580.0,265.9 L680.0,272.4 L770.0,275.4 L770.0,278.2 L680.0,276.1 L580.0,269.4 L514.0,267.4 L380.0,266.1 L332.4,264.4 L283.8,257.9 L271.6,232.6 L259.9,197.2 L247.0,190.3 L235.3,191.8 L222.4,197.4 L160.0,217.4 L137.0,221.0 L125.0,224.6 L77.5,235.0 L65.0,232.0 L53.0,221.2 L47.0,239.8 Z" fill="#558a45" fill-opacity="0.1" stroke="none"/><path d="M47.0,236.7 L53.0,217.3 L65.0,229.0 L77.5,231.5 L125.0,221.0 L137.0,216.9 L150.0,214.8 L160.0,212.1 L222.4,191.4 L235.3,186.0 L247.0,184.0 L259.9,192.0 L271.6,229.0 L283.8,253.3 L332.4,259.2 L380.0,260.4 L514.0,262.3 L580.0,265.0 L680.0,271.5 L770.0,274.5 L770.0,275.4 L680.0,272.4 L580.0,265.9 L514.0,263.2 L380.0,261.3 L332.4,260.1 L283.8,254.2 L271.6,229.9 L259.9,192.9 L247.0,184.9 L235.3,186.9 L222.4,192.3 L160.0,213.0 L150.0,215.7 L137.0,217.8 L125.0,221.9 L77.5,232.4 L65.0,229.9 L53.0,218.2 L47.0,237.6 Z" fill="#CCA300" fill-opacity="0.1" stroke="none"/><path d="M47.0,352.3 L160.0,345.8 L269.5,340.7 L283.8,339.4 L380.0,339.8 L580.0,338.9 L770.0,339.9" fill="none" stroke="#7EB26D" stroke-width="1.05" stroke-linejoin="round"/><path d="M47.0,348.4 L53.0,345.3 L77.5,345.0 L160.0,336.8 L259.9,328.3 L271.6,328.3 L283.8,330.3 L380.0,330.6 L514.0,329.0 L770.0,330.4" fill="none" stroke="#EAB839" stroke-width="1.05" stroke-linejoin="round"/><path d="M47.0,325.2 L53.0,318.0 L65.0,318.0 L77.5,316.7 L160.0,303.3 L222.4,293.7 L235.3,290.1 L247.0,290.1 L259.9,297.8 L271.6,299.1 L283.8,306.9 L332.4,309.7 L380.0,311.5 L580.0,312.1 L680.0,315.7 L770.0,316.8" fill="none" stroke="#6ED0E0" stroke-width="1.05" stroke-linejoin="round"/><path d="M47.0,324.6 L53.0,317.4 L65.0,317.4 L77.5,316.1 L160.0,302.7 L222.4,293.1 L235.3,289.5 L247.0,289.5 L259.9,297.2 L271.6,298.5 L283.8,306.3 L332.4,309.1 L380.0,310.9 L580.0,311.5 L680.0,315.1 L770.0,316.2" fill="none" stroke="#EF843C" stroke-width="1.05" stroke-linejoin="round"/><path d="M47.0,306.3 L53.0,300.6 L77.5,299.3 L160.0,285.9 L222.4,274.0 L235.3,270.9 L247.0,270.1 L259.9,278.6 L271.6,290.2 L283.8,298.0 L332.4,301.9 L380.0,303.6 L514.0,304.0 L580.0,305.2 L680.0,308.6 L770.0,309.5" fill="none" stroke="#E24D42" stroke-width="1.05" stroke-linejoin="round"/><path d="M47.0,259.2 L53.0,257.9 L65.0,260.0 L77.5,261.2 L125.0,251.6 L137.0,248.3 L150.0,247.3 L160.0,246.0 L222.4,230.3 L235.3,226.4 L247.0,224.8 L259.9,234.6 L271.6,269.0 L283.8,278.6 L332.4,283.8 L380.0,285.5 L514.0,286.3 L580.0,288.3 L680.0,293.8 L770.0,295.2" fill="none" stroke="#1F78C1" stroke-width="1.05" stroke-linejoin="round"/><path d="M47.0,248.9 L53.0,237.8 L65.0,245.0 L77.5,247.2 L125.0,237.5 L137.0,233.8 L150.0,232.4 L160.0,230.5 L222.4,212.7 L235.3,208.3 L247.0,206.5 L259.9,214.5 L271.6,250.7 L283.8,267.7 L332.4,274.0 L380.0,275.3 L514.0,276.6 L580.0,278.2 L680.0,284.3 L770.0,286.3" fill="none" stroke="#BA43A9" stroke-width="1.05" stroke-linejoin="round"/><path d="M47.0,239.8 L53.0,221.2 L65.0,232.0 L77.5,235.0 L125.0,224.6 L137.0,221.0 L160.0,217.4 L222.4,197.4 L235.3,191.8 L247.0,190.3 L259.9,197.2 L271.6,232.6 L283.8,257.9 L332.4,264.4 L380.0,266.1 L514.0,267.4 L580.0,269.4 L680.0,276.1 L770.0,278.2" fill="none" stroke="#705DA0" stroke-width="1.05" stroke-linejoin="round"/><path d="M47.0,237.6 L53.0,218.2 L65.0,229.9 L77.5,232.4 L125.0,221.9 L137.0,217.8 L150.0,215.7 L160.0,213.0 L222.4,192.3 L235.3,186.9 L247.0,184.9 L259.9,192.9 L271.6,229.9 L283.8,254.2 L332.4,260.1 L380.0,261.3 L514.0,263.2 L580.0,265.9 L680.0,272.4 L770.0,275.4" fill="none" stroke="#558a45" stroke-width="1.05" stroke-linejoin="round"/><path d="M47.0,236.7 L53.0,217.3 L65.0,229.0 L77.5,231.5 L125.0,221.0 L137.0,216.9 L150.0,214.8 L160.0,212.1 L222.4,191.4 L235.3,186.0 L247.0,184.0 L259.9,192.0 L271.6,229.0 L283.8,253.3 L332.4,259.2 L380.0,260.4 L514.0,262.3 L580.0,265.0 L680.0,271.5 L770.0,274.5" fill="none" stroke="#CCA300" stroke-width="1.05" stroke-linejoin="round"/><line x1="69" y1="483.5" x2="235" y2="483.5" stroke="#3f4146" stroke-width="1"/><line x1="69" y1="525.5" x2="235" y2="525.5" stroke="#3f4146" stroke-width="1"/><line x1="69" y1="567.5" x2="235" y2="567.5" stroke="#3f4146" stroke-width="1"/><line x1="69" y1="610.5" x2="235" y2="610.5" stroke="#3f4146" stroke-width="1"/><line x1="69" y1="652.5" x2="235" y2="652.5" stroke="#3f4146" stroke-width="1"/><line x1="69" y1="694.5" x2="235" y2="694.5" stroke="#3f4146" stroke-width="1"/><line x1="120.5" y1="483.1" x2="120.5" y2="694.2" stroke="#3f4146" stroke-width="1"/><line x1="175.5" y1="483.1" x2="175.5" y2="694.2" stroke="#3f4146" stroke-width="1"/><line x1="230.5" y1="483.1" x2="230.5" y2="694.2" stroke="#3f4146" stroke-width="1"/><path d="M69.0,694.3 L233.7,694.3 L233.7,694.2 L69.0,694.2 Z" fill="#7EB26D" fill-opacity="0.1" stroke="none"/><path d="M69.0,685.6 L120.0,685.4 L233.7,685.8 L233.7,694.3 L69.0,694.3 Z" fill="#EAB839" fill-opacity="0.1" stroke="none"/><path d="M69.0,566.4 L233.7,566.4 L233.7,685.8 L120.0,685.4 L69.0,685.6 Z" fill="#6ED0E0" fill-opacity="0.1" stroke="none"/><path d="M69.0,565.4 L233.7,565.4 L233.7,566.4 L69.0,566.4 Z" fill="#EF843C" fill-opacity="0.1" stroke="none"/><path d="M69.0,557.5 L70.5,556.3 L74.0,559.2 L78.0,558.3 L120.0,558.5 L233.7,559.4 L233.7,565.4 L69.0,565.4 Z" fill="#E24D42" fill-opacity="0.1" stroke="none"/><path d="M69.0,540.6 L70.5,539.5 L74.0,542.3 L78.0,540.4 L120.0,540.4 L140.0,541.3 L233.7,541.0 L233.7,559.4 L120.0,558.5 L78.0,558.3 L74.0,559.2 L70.5,556.3 L69.0,557.5 Z" fill="#1F78C1" fill-opacity="0.1" stroke="none"/><path d="M69.0,528.4 L70.5,525.6 L74.0,528.4 L78.0,526.1 L120.0,526.1 L140.0,527.4 L233.7,527.0 L233.7,541.0 L140.0,541.3 L120.0,540.4 L78.0,540.4 L74.0,542.3 L70.5,539.5 L69.0,540.6 Z" fill="#BA43A9" fill-opacity="0.1" stroke="none"/><path d="M69.0,511.3 L72.0,509.6 L75.0,510.8 L78.0,508.7 L140.0,508.4 L233.7,507.3 L233.7,527.0 L140.0,527.4 L120.0,526.1 L78.0,526.1 L74.0,528.4 L70.5,525.6 L69.0,528.4 Z" fill="#705DA0" fill-opacity="0.1" stroke="none"/><path d="M69.0,511.1 L70.5,506.9 L73.5,509.0 L78.0,506.9 L140.0,506.5 L233.7,505.5 L233.7,507.3 L140.0,508.4 L78.0,508.7 L75.0,510.8 L72.0,509.6 L69.0,511.3 Z" fill="#558a45" fill-opacity="0.1" stroke="none"/><path d="M69.0,510.0 L70.5,505.8 L73.5,507.9 L78.0,505.8 L140.0,505.4 L233.7,504.4 L233.7,505.5 L140.0,506.5 L78.0,506.9 L73.5,509.0 L70.5,506.9 L69.0,511.1 Z" fill="#CCA300" fill-opacity="0.1" stroke="none"/><path d="M69.0,694.3 L233.7,694.3" fill="none" stroke="#7EB26D" stroke-width="1.05" stroke-linejoin="round"/><path d="M69.0,685.6 L120.0,685.4 L233.7,685.8" fill="none" stroke="#EAB839" stroke-width="1.05" stroke-linejoin="round"/><path d="M69.0,566.4 L233.7,566.4" fill="none" stroke="#6ED0E0" stroke-width="1.05" stroke-linejoin="round"/><path d="M69.0,565.4 L233.7,565.4" fill="none" stroke="#EF843C" stroke-width="1.05" stroke-linejoin="round"/><path d="M69.0,557.5 L70.5,556.3 L74.0,559.2 L78.0,558.3 L120.0,558.5 L233.7,559.4" fill="none" stroke="#E24D42" stroke-width="1.05" stroke-linejoin="round"/><path d="M69.0,540.6 L70.5,539.5 L74.0,542.3 L78.0,540.4 L120.0,540.4 L140.0,541.3 L233.7,541.0" fill="none" stroke="#1F78C1" stroke-width="1.05" stroke-linejoin="round"/><path d="M69.0,528.4 L70.5,525.6 L74.0,528.4 L78.0,526.1 L120.0,526.1 L140.0,527.4 L233.7,527.0" fill="none" stroke="#BA43A9" stroke-width="1.05" stroke-linejoin="round"/><path d="M69.0,511.3 L72.0,509.6 L75.0,510.8 L78.0,508.7 L140.0,508.4 L233.7,507.3" fill="none" stroke="#705DA0" stroke-width="1.05" stroke-linejoin="round"/><path d="M69.0,511.1 L70.5,506.9 L73.5,509.0 L78.0,506.9 L140.0,506.5 L233.7,505.5" fill="none" stroke="#558a45" stroke-width="1.05" stroke-linejoin="round"/><path d="M69.0,510.0 L70.5,505.8 L73.5,507.9 L78.0,505.8 L140.0,505.4 L233.7,504.4" fill="none" stroke="#CCA300" stroke-width="1.05" stroke-linejoin="round"/><line x1="585" y1="483.5" x2="758.5" y2="483.5" stroke="#3f4146" stroke-width="1"/><line x1="585" y1="518.5" x2="758.5" y2="518.5" stroke="#3f4146" stroke-width="1"/><line x1="585" y1="553.5" x2="758.5" y2="553.5" stroke="#3f4146" stroke-width="1"/><line x1="585" y1="589.5" x2="758.5" y2="589.5" stroke="#3f4146" stroke-width="1"/><line x1="585" y1="624.5" x2="758.5" y2="624.5" stroke="#3f4146" stroke-width="1"/><line x1="585" y1="659.5" x2="758.5" y2="659.5" stroke="#3f4146" stroke-width="1"/><line x1="585" y1="695.5" x2="758.5" y2="695.5" stroke="#3f4146" stroke-width="1"/><line x1="638.5" y1="483" x2="638.5" y2="695.1" stroke="#3f4146" stroke-width="1"/><line x1="696.5" y1="483" x2="696.5" y2="695.1" stroke="#3f4146" stroke-width="1"/><line x1="754.5" y1="483" x2="754.5" y2="695.1" stroke="#3f4146" stroke-width="1"/><path d="M585.0,690.8 L640.0,689.9 L680.0,690.3 L756.7,690.9 L756.7,695.1 L585.0,695.1 Z" fill="#7EB26D" fill-opacity="0.1" stroke="none"/><path d="M585.0,681.3 L587.0,684.9 L640.0,685.5 L680.0,687.5 L692.0,687.2 L696.5,688.2 L756.7,688.2 L756.7,690.9 L680.0,690.3 L640.0,689.9 L585.0,690.8 Z" fill="#EAB839" fill-opacity="0.1" stroke="none"/><path d="M585.0,654.9 L587.0,672.8 L592.7,672.2 L629.0,673.3 L630.0,673.4 L638.2,674.0 L644.3,675.4 L654.5,676.8 L663.4,677.9 L681.8,678.4 L694.0,679.2 L696.5,680.1 L712.0,681.2 L756.7,680.6 L756.7,688.2 L696.5,688.2 L692.0,687.2 L680.0,687.5 L640.0,685.5 L587.0,684.9 L585.0,681.3 Z" fill="#6ED0E0" fill-opacity="0.1" stroke="none"/><path d="M585.0,643.2 L587.0,666.5 L589.5,660.8 L594.8,659.7 L606.4,659.1 L629.0,660.3 L630.0,660.4 L638.2,661.8 L644.3,663.8 L654.5,665.9 L663.4,667.9 L672.2,668.6 L681.8,668.6 L684.5,661.1 L692.0,659.7 L696.8,662.5 L710.0,663.4 L712.0,662.9 L756.7,662.4 L756.7,680.6 L712.0,681.2 L696.5,680.1 L694.0,679.2 L681.8,678.4 L663.4,677.9 L654.5,676.8 L644.3,675.4 L638.2,674.0 L630.0,673.4 L629.0,673.3 L592.7,672.2 L587.0,672.8 L585.0,654.9 Z" fill="#EF843C" fill-opacity="0.1" stroke="none"/><path d="M585.0,614.7 L587.0,644.3 L589.5,639.7 L594.8,638.6 L606.4,639.7 L609.6,641.1 L629.0,641.9 L630.0,642.0 L638.2,644.7 L644.3,648.8 L648.4,650.9 L654.5,652.2 L663.4,655.6 L672.2,657.0 L681.8,657.0 L684.5,650.2 L692.0,649.5 L696.8,653.6 L710.0,654.7 L712.0,654.4 L756.7,654.4 L756.7,662.4 L712.0,662.9 L710.0,663.4 L696.8,662.5 L692.0,659.7 L684.5,661.1 L681.8,668.6 L672.2,668.6 L663.4,667.9 L654.5,665.9 L644.3,663.8 L638.2,661.8 L630.0,660.4 L629.0,660.3 L606.4,659.1 L594.8,659.7 L589.5,660.8 L587.0,666.5 L585.0,643.2 Z" fill="#E24D42" fill-opacity="0.1" stroke="none"/><path d="M585.0,614.0 L587.0,638.0 L589.5,633.3 L594.8,632.0 L606.4,633.3 L609.6,635.4 L629.0,636.0 L630.0,636.1 L638.2,638.6 L644.3,644.0 L648.4,646.1 L654.5,647.5 L663.4,650.9 L672.2,652.0 L681.8,652.0 L684.5,645.1 L692.0,644.7 L696.8,648.8 L710.0,650.2 L712.0,650.0 L756.7,650.0 L756.7,654.4 L712.0,654.4 L710.0,654.7 L696.8,653.6 L692.0,649.5 L684.5,650.2 L681.8,657.0 L672.2,657.0 L663.4,655.6 L654.5,652.2 L648.4,650.9 L644.3,648.8 L638.2,644.7 L630.0,642.0 L629.0,641.9 L609.6,641.1 L606.4,639.7 L594.8,638.6 L589.5,639.7 L587.0,644.3 L585.0,614.7 Z" fill="#1F78C1" fill-opacity="0.1" stroke="none"/><path d="M585.0,603.0 L587.0,629.1 L589.5,624.2 L594.8,623.2 L606.4,624.2 L609.6,626.3 L629.0,627.2 L630.0,627.4 L638.2,629.7 L644.3,635.9 L648.4,637.9 L654.5,640.0 L663.4,644.0 L672.2,646.1 L681.8,646.1 L684.5,639.3 L692.0,639.3 L696.8,644.0 L710.0,645.7 L712.0,646.1 L756.7,646.1 L756.7,650.0 L712.0,650.0 L710.0,650.2 L696.8,648.8 L692.0,644.7 L684.5,645.1 L681.8,652.0 L672.2,652.0 L663.4,650.9 L654.5,647.5 L648.4,646.1 L644.3,644.0 L638.2,638.6 L630.0,636.1 L629.0,636.0 L609.6,635.4 L606.4,633.3 L594.8,632.0 L589.5,633.3 L587.0,638.0 L585.0,614.0 Z" fill="#BA43A9" fill-opacity="0.1" stroke="none"/><path d="M585.0,587.3 L587.0,624.2 L589.5,619.0 L594.8,617.5 L599.0,619.0 L606.4,619.0 L609.6,621.5 L629.0,622.6 L630.0,622.9 L638.2,625.6 L644.3,632.5 L648.4,634.5 L654.5,636.6 L663.4,641.3 L672.2,643.0 L681.8,643.0 L684.5,636.1 L692.0,636.1 L696.8,641.6 L710.0,643.4 L712.0,642.9 L756.7,642.9 L756.7,646.1 L712.0,646.1 L710.0,645.7 L696.8,644.0 L692.0,639.3 L684.5,639.3 L681.8,646.1 L672.2,646.1 L663.4,644.0 L654.5,640.0 L648.4,637.9 L644.3,635.9 L638.2,629.7 L630.0,627.4 L629.0,627.2 L609.6,626.3 L606.4,624.2 L594.8,623.2 L589.5,624.2 L587.0,629.1 L585.0,603.0 Z" fill="#705DA0" fill-opacity="0.1" stroke="none"/><path d="M585.0,601.5 L586.0,601.0 L588.5,595.7 L592.7,594.7 L596.9,595.3 L601.1,593.6 L606.4,592.5 L609.6,595.7 L629.0,596.3 L630.0,596.3 L638.2,599.8 L644.3,605.9 L648.4,607.3 L654.5,607.9 L663.4,611.6 L672.2,612.7 L681.8,612.7 L684.5,606.6 L692.0,607.3 L696.8,614.1 L710.0,616.5 L712.0,616.9 L756.7,617.3 L756.7,642.9 L712.0,642.9 L710.0,643.4 L696.8,641.6 L692.0,636.1 L684.5,636.1 L681.8,643.0 L672.2,643.0 L663.4,641.3 L654.5,636.6 L648.4,634.5 L644.3,632.5 L638.2,625.6 L630.0,622.9 L629.0,622.6 L609.6,621.5 L606.4,619.0 L599.0,619.0 L594.8,617.5 L589.5,619.0 L587.0,624.2 L585.0,587.3 Z" fill="#558a45" fill-opacity="0.1" stroke="none"/><path d="M585.0,556.6 L587.4,593.6 L588.5,589.8 L591.6,588.3 L595.8,587.3 L600.0,588.3 L606.4,585.6 L609.6,588.7 L613.8,588.7 L618.0,586.2 L629.0,586.2 L630.0,586.1 L638.2,589.5 L644.3,596.3 L648.4,597.7 L654.5,598.4 L663.4,603.4 L672.2,604.8 L681.8,604.8 L684.5,598.8 L691.3,599.1 L696.8,605.9 L710.0,609.3 L712.0,609.8 L756.7,609.8 L756.7,617.3 L712.0,616.9 L710.0,616.5 L696.8,614.1 L692.0,607.3 L684.5,606.6 L681.8,612.7 L672.2,612.7 L663.4,611.6 L654.5,607.9 L648.4,607.3 L644.3,605.9 L638.2,599.8 L630.0,596.3 L629.0,596.3 L609.6,595.7 L606.4,592.5 L601.1,593.6 L596.9,595.3 L592.7,594.7 L588.5,595.7 L586.0,601.0 L585.0,601.5 Z" fill="#CCA300" fill-opacity="0.1" stroke="none"/><path d="M585.0,690.8 L640.0,689.9 L680.0,690.3 L756.7,690.9" fill="none" stroke="#7EB26D" stroke-width="1.05" stroke-linejoin="round"/><path d="M585.0,681.3 L587.0,684.9 L640.0,685.5 L680.0,687.5 L692.0,687.2 L696.5,688.2 L756.7,688.2" fill="none" stroke="#EAB839" stroke-width="1.05" stroke-linejoin="round"/><path d="M585.0,654.9 L587.0,672.8 L592.7,672.2 L629.0,673.3 L630.0,673.4 L638.2,674.0 L644.3,675.4 L654.5,676.8 L663.4,677.9 L681.8,678.4 L694.0,679.2 L696.5,680.1 L712.0,681.2 L756.7,680.6" fill="none" stroke="#6ED0E0" stroke-width="1.05" stroke-linejoin="round"/><path d="M585.0,643.2 L587.0,666.5 L589.5,660.8 L594.8,659.7 L606.4,659.1 L629.0,660.3 L630.0,660.4 L638.2,661.8 L644.3,663.8 L654.5,665.9 L663.4,667.9 L672.2,668.6 L681.8,668.6 L684.5,661.1 L692.0,659.7 L696.8,662.5 L710.0,663.4 L712.0,662.9 L756.7,662.4" fill="none" stroke="#EF843C" stroke-width="1.05" stroke-linejoin="round"/><path d="M585.0,614.7 L587.0,644.3 L589.5,639.7 L594.8,638.6 L606.4,639.7 L609.6,641.1 L629.0,641.9 L630.0,642.0 L638.2,644.7 L644.3,648.8 L648.4,650.9 L654.5,652.2 L663.4,655.6 L672.2,657.0 L681.8,657.0 L684.5,650.2 L692.0,649.5 L696.8,653.6 L710.0,654.7 L712.0,654.4 L756.7,654.4" fill="none" stroke="#E24D42" stroke-width="1.05" stroke-linejoin="round"/><path d="M585.0,614.0 L587.0,638.0 L589.5,633.3 L594.8,632.0 L606.4,633.3 L609.6,635.4 L629.0,636.0 L630.0,636.1 L638.2,638.6 L644.3,644.0 L648.4,646.1 L654.5,647.5 L663.4,650.9 L672.2,652.0 L681.8,652.0 L684.5,645.1 L692.0,644.7 L696.8,648.8 L710.0,650.2 L712.0,650.0 L756.7,650.0" fill="none" stroke="#1F78C1" stroke-width="1.05" stroke-linejoin="round"/><path d="M585.0,603.0 L587.0,629.1 L589.5,624.2 L594.8,623.2 L606.4,624.2 L609.6,626.3 L629.0,627.2 L630.0,627.4 L638.2,629.7 L644.3,635.9 L648.4,637.9 L654.5,640.0 L663.4,644.0 L672.2,646.1 L681.8,646.1 L684.5,639.3 L692.0,639.3 L696.8,644.0 L710.0,645.7 L712.0,646.1 L756.7,646.1" fill="none" stroke="#BA43A9" stroke-width="1.05" stroke-linejoin="round"/><path d="M585.0,587.3 L587.0,624.2 L589.5,619.0 L594.8,617.5 L599.0,619.0 L606.4,619.0 L609.6,621.5 L629.0,622.6 L630.0,622.9 L638.2,625.6 L644.3,632.5 L648.4,634.5 L654.5,636.6 L663.4,641.3 L672.2,643.0 L681.8,643.0 L684.5,636.1 L692.0,636.1 L696.8,641.6 L710.0,643.4 L712.0,642.9 L756.7,642.9" fill="none" stroke="#705DA0" stroke-width="1.05" stroke-linejoin="round"/><path d="M585.0,601.5 L586.0,601.0 L588.5,595.7 L592.7,594.7 L596.9,595.3 L601.1,593.6 L606.4,592.5 L609.6,595.7 L629.0,596.3 L630.0,596.3 L638.2,599.8 L644.3,605.9 L648.4,607.3 L654.5,607.9 L663.4,611.6 L672.2,612.7 L681.8,612.7 L684.5,606.6 L692.0,607.3 L696.8,614.1 L710.0,616.5 L712.0,616.9 L756.7,617.3" fill="none" stroke="#558a45" stroke-width="1.05" stroke-linejoin="round"/><path d="M585.0,556.6 L587.4,593.6 L588.5,589.8 L591.6,588.3 L595.8,587.3 L600.0,588.3 L606.4,585.6 L609.6,588.7 L613.8,588.7 L618.0,586.2 L629.0,586.2 L630.0,586.1 L638.2,589.5 L644.3,596.3 L648.4,597.7 L654.5,598.4 L663.4,603.4 L672.2,604.8 L681.8,604.8 L684.5,598.8 L691.3,599.1 L696.8,605.9 L710.0,609.3 L712.0,609.8 L756.7,609.8" fill="none" stroke="#CCA300" stroke-width="1.05" stroke-linejoin="round"/><rect x="798" y="207.0" width="14" height="4" rx="1.5" fill="#7EB26D"/><rect x="798" y="233.7" width="14" height="4" rx="1.5" fill="#EAB839"/><rect x="798" y="260.5" width="14" height="4" rx="1.5" fill="#6ED0E0"/><rect x="798" y="287.2" width="14" height="4" rx="1.5" fill="#EF843C"/><rect x="798" y="313.9" width="14" height="4" rx="1.5" fill="#E24D42"/><rect x="798" y="340.6" width="14" height="4" rx="1.5" fill="#1F78C1"/><rect x="798" y="367.4" width="14" height="4" rx="1.5" fill="#BA43A9"/><rect x="258" y="510.8" width="14" height="4" rx="1.5" fill="#7EB26D"/><rect x="258" y="537.6" width="14" height="4" rx="1.5" fill="#EAB839"/><rect x="258" y="564.5" width="14" height="4" rx="1.5" fill="#6ED0E0"/><rect x="258" y="591.3" width="14" height="4" rx="1.5" fill="#EF843C"/><rect x="258" y="618.1" width="14" height="4" rx="1.5" fill="#E24D42"/><rect x="258" y="644.9" width="14" height="4" rx="1.5" fill="#1F78C1"/><rect x="258" y="671.8" width="14" height="4" rx="1.5" fill="#BA43A9"/><rect x="258" y="698.6" width="14" height="4" rx="1.5" fill="#705DA0"/><rect x="781" y="510.8" width="14" height="4" rx="1.5" fill="#7EB26D"/><rect x="781" y="537.6" width="14" height="4" rx="1.5" fill="#EAB839"/><rect x="781" y="564.5" width="14" height="4" rx="1.5" fill="#6ED0E0"/><rect x="781" y="591.3" width="14" height="4" rx="1.5" fill="#EF843C"/><rect x="781" y="618.1" width="14" height="4" rx="1.5" fill="#E24D42"/><rect x="781" y="644.9" width="14" height="4" rx="1.5" fill="#1F78C1"/><rect x="781" y="671.8" width="14" height="4" rx="1.5" fill="#BA43A9"/><rect x="781" y="698.6" width="14" height="4" rx="1.5" fill="#705DA0"/></svg>
</body></html>
